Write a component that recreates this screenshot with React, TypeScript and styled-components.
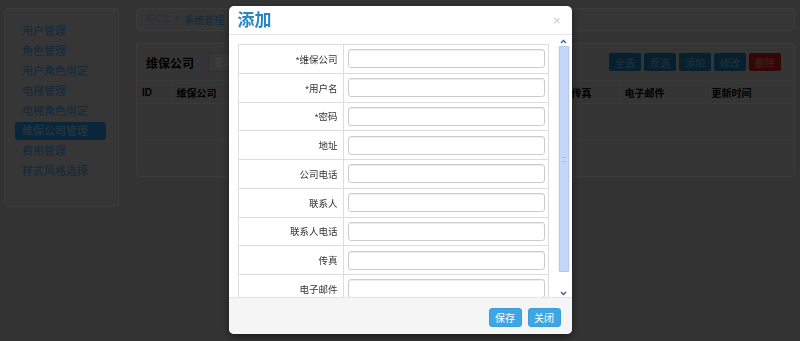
import React from 'react';
import styled, { createGlobalStyle } from 'styled-components';

const GlobalStyle = createGlobalStyle`
  html, body {
    margin: 0;
    padding: 0;
  }
  body {
    width: 800px;
    height: 341px;
    overflow: hidden;
    background: #cccccc;
    font-family: "Liberation Sans", "Noto Sans CJK SC", sans-serif;
  }
  * {
    box-sizing: border-box;
  }
`;

/* ---------- page behind the dialog ---------- */

const Page = styled.div`
  display: flex;
  align-items: flex-start;
  gap: 17px;
  padding: 8px 5px 0 4px;
`;

const Sidebar = styled.nav`
  width: 117px;
  padding: 13px 12px 24px 10px;
  background: #d6d6d6;
  border: 1px solid #eeeeee;
  border-radius: 4px;
`;

const NavItem = styled.div<{ $active?: boolean }>`
  height: 18px;
  margin-bottom: 2px;
  padding-left: 7px;
  line-height: 18px;
  font-size: 11px;
  white-space: nowrap;
  border-radius: 3px;
  color: ${(p) => (p.$active ? '#a0e0ff' : '#4aa8f0')};
  background: ${(p) => (p.$active ? '#2a98e8' : 'transparent')};
`;

const Main = styled.div`
  flex: 1;
  display: flex;
  flex-direction: column;
  gap: 12px;
`;

const Breadcrumb = styled.div`
  height: 23px;
  display: flex;
  align-items: center;
  gap: 6px;
  padding-left: 9px;
  font-size: 10px;
  white-space: nowrap;
  color: #8cc0f0;
  background: #d6d6d6;
  border: 1px solid #eeeeee;
  border-radius: 3px;

  b {
    font-weight: normal;
    color: #4aa8f0;
  }
`;

const Panel = styled.section`
  border: 1px solid #eeeeee;
  border-radius: 3px;
  background: #d4d4d4;
`;

const PanelHeader = styled.div`
  height: 36px;
  display: flex;
  align-items: center;
  gap: 14px;
  padding: 0 13px 0 9px;
`;

const PanelTitle = styled.h3`
  margin: 0;
  font-size: 12px;
  font-weight: bold;
  color: #000000;
`;

const Search = styled.input`
  width: 160px;
  height: 20px;
  padding: 0 5px;
  font-size: 10px;
  border: 1px solid #bdbdbd;
  border-radius: 2px;
  background: #dcdcdc;
  font-family: inherit;

  &::placeholder {
    color: #ffffff;
  }
`;

const ToolButtons = styled.div`
  margin-left: auto;
  display: flex;
  gap: 3px;
`;

const ToolButton = styled.button<{ $danger?: boolean }>`
  width: 32px;
  height: 18px;
  padding: 0;
  font-size: 10px;
  font-family: inherit;
  color: ${(p) => (p.$danger ? '#e09090' : '#90c0e0')};
  border: none;
  border-radius: 2px;
  background: ${(p) => (p.$danger ? '#d01818' : '#1e80c0')};
`;

const DataTable = styled.table`
  width: 100%;
  border-collapse: collapse;
  table-layout: fixed;
  font-size: 10px;

  th {
    height: 23px;
    padding: 0 5px;
    text-align: left;
    font-weight: bold;
    white-space: nowrap;
    overflow: hidden;
    color: #000000;
    border-top: 1px solid #e8e8e8;
    border-bottom: 1px solid #e8e8e8;
    border-left: 1px solid #e8e8e8;
  }
  th:first-child {
    border-left: none;
  }
  td {
    padding: 0;
    border-bottom: 1px solid #e8e8e8;
  }
  tr:last-child td {
    border-bottom: none;
  }
`;

/* ---------- dialog ---------- */

const Backdrop = styled.div`
  position: fixed;
  inset: 0;
  background: rgba(0, 0, 0, 0.75);
`;

const ModalLayer = styled.div`
  position: fixed;
  inset: 0;
  display: flex;
  justify-content: center;
  align-items: flex-start;
  padding-top: 6px;
`;

const Modal = styled.div`
  width: 343px;
  height: 328px;
  display: flex;
  flex-direction: column;
  background: #ffffff;
  border-radius: 5px;
  overflow: hidden;
  box-shadow: 0 3px 9px rgba(0, 0, 0, 0.5);
`;

const ModalHeader = styled.div`
  height: 29px;
  flex-shrink: 0;
  display: flex;
  align-items: center;
  justify-content: space-between;
  padding: 0 11px 0 9px;
  border-bottom: 1px solid #e5e5e5;
`;

const ModalTitle = styled.h4`
  margin: 0;
  font-size: 17px;
  font-weight: bold;
  line-height: 1;
  color: #2786c4;
`;

const CloseMark = styled.span`
  font-size: 13px;
  color: #c8c8c8;
`;

const ModalBody = styled.div`
  flex: 1;
  min-height: 0;
  display: flex;
`;

const FormArea = styled.div`
  flex: 1;
  overflow: hidden;
  padding: 9px 9px 0 9px;
`;

const FormTable = styled.table`
  width: 100%;
  border-collapse: collapse;
  border: 1px solid #dddddd;

  tr {
    height: 28.75px;
    border-top: 1px solid #dddddd;
  }
`;

const LabelCell = styled.td`
  width: 105px;
  padding: 0 5px 0 0;
  text-align: right;
  font-size: 9.5px;
  color: #333333;
  border-right: 1px solid #dddddd;
`;

const InputCell = styled.td`
  padding: 0 3px 0 4px;
`;

const TextInput = styled.input`
  display: block;
  width: 100%;
  height: 19px;
  border: 1px solid #cccccc;
  border-radius: 3px;
  box-shadow: inset 0 1px 1px rgba(0, 0, 0, 0.075);
`;

const ScrollBar = styled.div`
  width: 12px;
  margin: 1px 2px 0 0;
  display: flex;
  flex-direction: column;
  background: #f4f6fa;
`;

const ScrollArrow = styled.div<{ $h: number }>`
  height: ${(p) => p.$h}px;
  display: flex;
  align-items: center;
  justify-content: center;
  background: #ffffff;
`;

const ScrollThumb = styled.div`
  height: 226px;
  margin: 0 1px;
  display: flex;
  align-items: center;
  justify-content: center;
  background: #c4d7f8;
  border: 1px solid #b2c8f2;
  border-radius: 1px;

  span {
    width: 4px;
    height: 5px;
    border-top: 1px solid #a9bfe8;
    border-bottom: 1px solid #a9bfe8;
  }
`;

const ScrollTrack = styled.div`
  flex: 1;
  background: #ffffff;
`;

const ModalFooter = styled.div`
  height: 37px;
  flex-shrink: 0;
  display: flex;
  align-items: center;
  justify-content: flex-end;
  gap: 6px;
  padding: 2px 11px 0 0;
  background: #f5f5f5;
  border-top: 1px solid #e5e5e5;
`;

const FooterButton = styled.button`
  width: 33px;
  height: 19px;
  padding: 0;
  font-size: 10px;
  font-family: inherit;
  color: #ffffff;
  background: #3ea6e2;
  border: 1px solid #3a9fdb;
  border-radius: 3px;
`;

const Chevron = ({ up }: { up?: boolean }) => (
  <svg width="7" height="5" viewBox="0 0 7 5">
    <path
      d={up ? 'M1 4 L3.5 1.5 L6 4' : 'M1 1 L3.5 3.5 L6 1'}
      fill="none"
      stroke="#3d5f92"
      strokeWidth="1.4"
    />
  </svg>
);

const menu = [
  '用户管理',
  '角色管理',
  '用户角色绑定',
  '电梯管理',
  '电梯角色绑定',
  '维保公司管理',
  '费用管理',
  '样式风格选择',
];

const columns: [string, number][] = [
  ['ID', 34],
  ['维保公司', 80],
  ['用户名', 60],
  ['地址', 85],
  ['公司电话', 60],
  ['联系人', 50],
  ['联系人电话', 60],
  ['传真', 53],
  ['电子邮件', 87],
  ['更新时间', 88],
];

const fields = [
  '*维保公司',
  '*用户名',
  '*密码',
  '地址',
  '公司电话',
  '联系人',
  '联系人电话',
  '传真',
  '电子邮件',
];

export default function App() {
  return (
    <>
      <GlobalStyle />
      <Page>
        <Sidebar>
          {menu.map((m) => (
            <NavItem key={m} $active={m === '维保公司管理'}>
              {m}
            </NavItem>
          ))}
        </Sidebar>

        <Main>
          <Breadcrumb>
            <span>IECS</span>/<b>系统管理</b>/<span>用户管理</span>
          </Breadcrumb>

          <Panel>
            <PanelHeader>
              <PanelTitle>维保公司</PanelTitle>
              <Search placeholder="查询关键字" />
              <ToolButtons>
                <ToolButton>全选</ToolButton>
                <ToolButton>反选</ToolButton>
                <ToolButton>添加</ToolButton>
                <ToolButton>修改</ToolButton>
                <ToolButton $danger>删除</ToolButton>
              </ToolButtons>
            </PanelHeader>
            <DataTable>
              <colgroup>
                {columns.map(([c, w]) => (
                  <col key={c} style={{ width: w }} />
                ))}
              </colgroup>
              <thead>
                <tr>
                  {columns.map(([c]) => (
                    <th key={c}>{c}</th>
                  ))}
                </tr>
              </thead>
              <tbody>
                <tr style={{ height: 37 }}>
                  <td colSpan={columns.length} />
                </tr>
                <tr style={{ height: 35 }}>
                  <td colSpan={columns.length} />
                </tr>
              </tbody>
            </DataTable>
          </Panel>
        </Main>
      </Page>

      <Backdrop />
      <ModalLayer>
        <Modal>
          <ModalHeader>
            <ModalTitle>添加</ModalTitle>
            <CloseMark>×</CloseMark>
          </ModalHeader>

          <ModalBody>
            <FormArea>
              <FormTable>
                <tbody>
                  {fields.map((f) => (
                    <tr key={f}>
                      <LabelCell>{f}</LabelCell>
                      <InputCell>
                        <TextInput type={f === '*密码' ? 'password' : 'text'} />
                      </InputCell>
                    </tr>
                  ))}
                </tbody>
              </FormTable>
            </FormArea>
            <ScrollBar>
              <ScrollArrow $h={10}>
                <Chevron up />
              </ScrollArrow>
              <ScrollThumb>
                <span />
              </ScrollThumb>
              <ScrollTrack />
              <ScrollArrow $h={8}>
                <Chevron />
              </ScrollArrow>
            </ScrollBar>
          </ModalBody>

          <ModalFooter>
            <FooterButton>保存</FooterButton>
            <FooterButton>关闭</FooterButton>
          </ModalFooter>
        </Modal>
      </ModalLayer>
    </>
  );
}
